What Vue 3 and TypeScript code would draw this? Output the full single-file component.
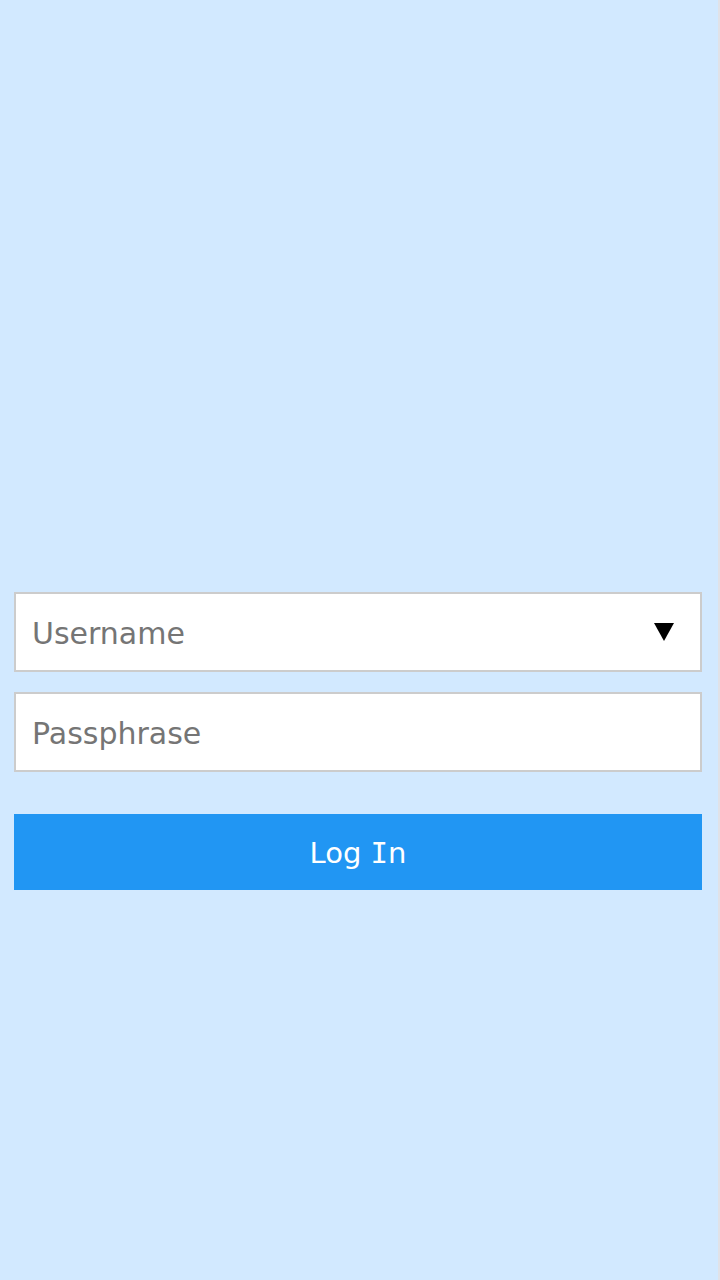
<script setup lang="ts">
import { ref } from 'vue'

const username = ref('')
const passphrase = ref('')
</script>

<template>
  <main class="page">
    <form class="login" @submit.prevent>
      <div class="field">
        <input v-model="username" class="input" type="text" placeholder="Username" aria-label="Username" autocomplete="username" />
        <button class="toggle" type="button" aria-label="Show usernames">
          <svg class="arrow" viewBox="0 0 20 18" aria-hidden="true"><path d="M0 0H20L10 18Z" /></svg>
        </button>
      </div>
      <div class="field">
        <input v-model="passphrase" class="input" type="password" placeholder="Passphrase" aria-label="Passphrase" autocomplete="current-password" />
      </div>
      <button class="submit" type="submit">Log <span class="serif-i">I</span>n</button>
    </form>
  </main>
</template>

<style>
body {
  margin: 0;
  background: #d2e9ff;
}
</style>

<style scoped>
.page {
  box-sizing: border-box;
  min-height: 100vh;
  padding: 592px 16px 40px 14px;
  border-right: 2px solid #e0e2e8;
  background: #d2e9ff;
  font-family: "DejaVu Sans", Verdana, sans-serif;
}

.login {
  display: flex;
  flex-direction: column;
  gap: 20px;
}

.field {
  display: flex;
  align-items: center;
  box-sizing: border-box;
  height: 80px;
  border: 2px solid #cccccc;
  background: #ffffff;
}

.input {
  flex: 1;
  min-width: 0;
  height: 100%;
  box-sizing: border-box;
  padding: 2px 16px 0;
  border: 0;
  outline: 0;
  background: transparent;
  color: #000000;
  font: inherit;
  font-size: 30px;
}

.input::placeholder {
  color: #757575;
  opacity: 1;
}

.toggle {
  display: flex;
  padding: 8px 26px;
  border: 0;
  background: transparent;
  color: #000000;
  cursor: pointer;
}

.arrow {
  display: block;
  width: 20px;
  height: 18px;
  fill: currentColor;
}

.submit {
  height: 76px;
  margin-top: 22px;
  padding: 2px 0 0;
  border: 0;
  background: #2196f3;
  color: #ffffff;
  font: inherit;
  font-size: 29px;
  cursor: pointer;
}

.serif-i {
  font-family: "DejaVu Sans Mono", monospace;
}
</style>
